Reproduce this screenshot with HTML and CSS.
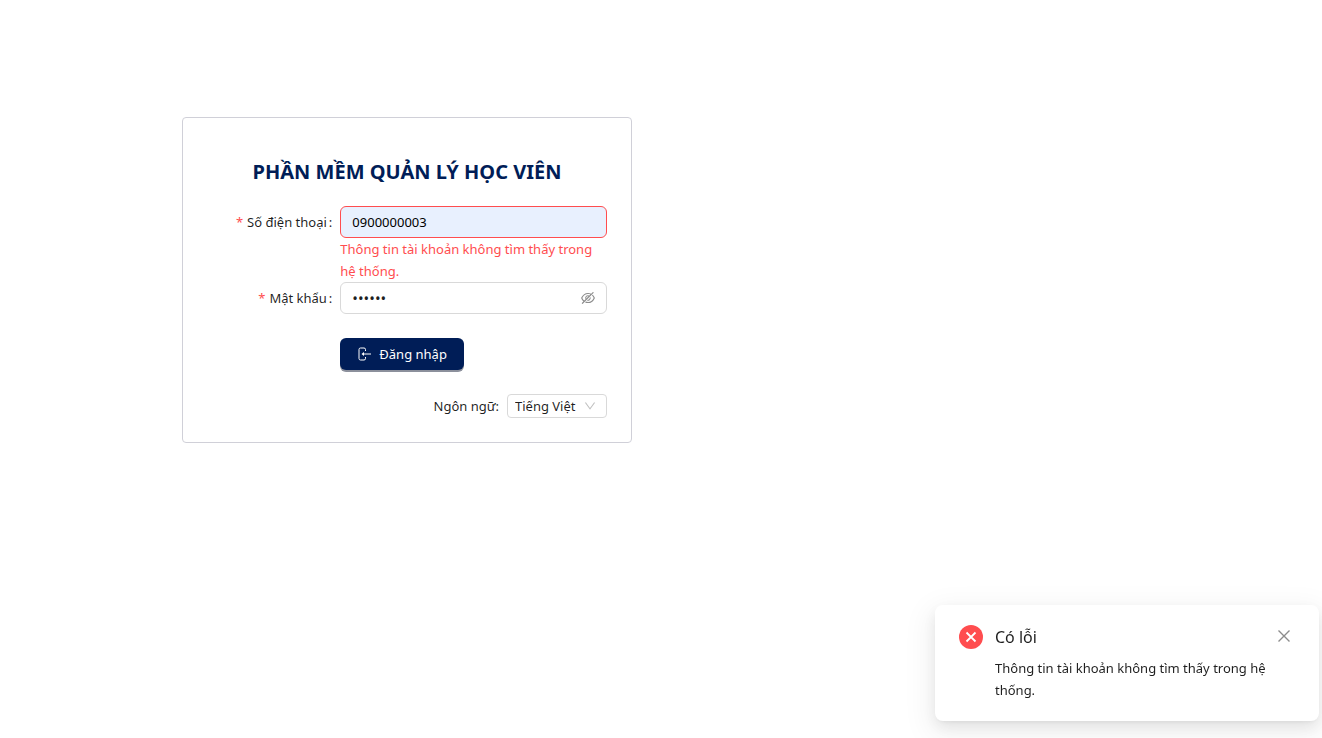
FILE: index.html
```html
<!DOCTYPE html>
<html lang="vi">
<head>
  <meta charset="UTF-8" />
  <meta name="viewport" content="width=device-width, initial-scale=1" />
  <title>Phần mềm quản lý học viên</title>
  <link rel="stylesheet" href="styles.css">
</head>
<body>
  <main class="login-page">
    <form class="login-card" onsubmit="return false">
      <h1 class="login-title">PHẦN MỀM QUẢN LÝ HỌC VIÊN</h1>

      <div class="form-item">
        <label for="phone" class="required">Số điện thoại</label>
        <div class="form-control">
          <input type="text" id="phone" class="input input-error" value="0900000003" aria-describedby="phoneError" />
          <div id="phoneError" class="error-text">Thông tin tài khoản không tìm thấy trong hệ thống.</div>
        </div>
      </div>

      <div class="form-item">
        <label for="password" class="required">Mật khẩu</label>
        <div class="form-control input password-box">
          <input type="password" id="password" value="123456" />
          <button type="button" class="icon-btn" id="togglePassword" aria-label="Hiện mật khẩu">
            <svg viewBox="64 64 896 896" width="14" height="14" fill="currentColor">
              <path d="M942.2 486.2Q889.47 375.11 816.7 305l-50.88 50.88C807.31 395.53 843.45 447.4 874.7 512 791.5 684.2 673.4 766 512 766q-72.67 0-133.87-22.38L323 798.75Q408 838 512 838q288.3 0 430.2-300.3a60.29 60.29 0 000-51.5zm-63.57-320.64L836 122.88a8 8 0 00-11.32 0L715.31 232.2Q624.86 186 512 186q-288.3 0-430.2 300.3a60.3 60.3 0 000 51.5q56.69 119.4 136.5 191.41L112.48 835a8 8 0 000 11.31L155.17 889a8 8 0 0011.31 0l712.15-712.12a8 8 0 000-11.32zM149.3 512C232.6 339.8 350.7 258 512 258c54.54 0 104.13 9.36 149.12 28.39l-70.3 70.3a176 176 0 00-238.13 238.13l-83.42 83.42C223.1 637.49 183.3 582.28 149.3 512zm246.7 0a112.11 112.11 0 01146.2-106.69L401.31 546.2A112 112 0 01396 512z" />
              <path d="M508 624c-3.46 0-6.87-.16-10.25-.47l-52.82 52.82a176.09 176.09 0 00227.42-227.42l-52.82 52.82c.31 3.38.47 6.79.47 10.25a111.94 111.94 0 01-112 112z" />
            </svg>
          </button>
        </div>
      </div>

      <div class="form-actions">
        <button type="submit" class="btn-primary">
          <svg viewBox="0 0 14 14" width="14" height="14" fill="none" stroke="currentColor">
            <path d="M8.5 4V2.500a1.500 1.500 0 0 0-1.500-1.500H3.500a1.500 1.500 0 0 0-1.500 1.500v9a1.500 1.500 0 0 0 1.500 1.500H7a1.500 1.500 0 0 0 1.500-1.500V10" />
            <path d="M14 7H6" />
            <path d="M7 5v4L4.500 7z" fill="currentColor" stroke="none" />
          </svg>
          <span>Đăng nhập</span>
        </button>
      </div>

      <div class="language">
        <label for="language">Ngôn ngữ:</label>
        <div class="select-box">
          <select id="language">
            <option value="vi">Tiếng Việt</option>
            <option value="en">English</option>
          </select>
          <svg class="arrow" viewBox="64 64 896 896" width="12" height="12" fill="currentColor">
            <path d="M884 256h-75c-5.1 0-9.9 2.5-12.9 6.6L512 654.2 227.9 262.6c-3-4.1-7.8-6.6-12.9-6.6h-75c-6.5 0-10.3 7.4-6.5 12.7l352.6 486.1c12.8 17.6 39 17.6 51.7 0l352.6-486.1c3.9-5.3.1-12.7-6.4-12.7z" />
          </svg>
        </div>
      </div>
    </form>
  </main>

  <!-- Thông báo lỗi -->
  <div class="notification" id="notification" role="alert">
    <svg class="notification-icon" viewBox="0 0 24 24" width="24" height="24">
      <circle cx="12" cy="12" r="12" fill="#ff4d4f" />
      <path d="M7.5 7.5l9 9M16.5 7.5l-9 9" stroke="#fff" stroke-width="1.8" />
    </svg>
    <div class="notification-body">
      <div class="notification-title">Có lỗi</div>
      <div class="notification-text">Thông tin tài khoản không tìm thấy trong hệ thống.</div>
    </div>
    <button type="button" class="icon-btn close-btn" id="closeNotification" aria-label="Đóng">
      <svg viewBox="0 0 16 16" width="16" height="16" fill="none" stroke="currentColor" stroke-width="1.4">
        <path d="M2.5 2.5l11 11M13.5 2.5l-11 11" />
      </svg>
    </button>
  </div>

  <script>
    document.getElementById("togglePassword").addEventListener("click", function () {
      const input = document.getElementById("password");
      input.type = input.type === "password" ? "text" : "password";
    });

    document.getElementById("closeNotification").addEventListener("click", function () {
      document.getElementById("notification").style.display = "none";
    });
  </script>
</body>
</html>
```

FILE: styles.css
```css
* {
  box-sizing: border-box;
}
body {
  margin: 0;
  font-family: "Segoe UI", "Noto Sans", sans-serif;
  font-size: 13px;
  line-height: 22px;
  color: rgba(0, 0, 0, 0.88);
  background: #fff;
}
input, select, button {
  font-family: inherit;
  font-size: inherit;
  line-height: inherit;
  color: inherit;
}
svg {
  display: block;
}
.login-page {
  padding: 117px 24px 24px 182px;
}
.login-card {
  max-width: 450px;
  padding: 24px;
  border: 1px solid #d0d0d8;
  border-radius: 4px;
}
.login-title {
  margin: 16px 0 20px;
  font-size: 20px;
  line-height: 28px;
  font-weight: 700;
  text-align: center;
  color: #001d57;
}
.form-item {
  display: grid;
  grid-template-columns: 1fr 2fr;
}
.form-item label {
  line-height: 32px;
  text-align: right;
  padding-right: 8px;
}
.required::before {
  content: "*";
  margin-right: 4px;
  color: #ff4d4f;
}
.required::after {
  content: ":";
  margin-left: 2px;
}
.input {
  display: block;
  width: 100%;
  height: 32px;
  padding: 4px 11px;
  border: 1px solid #d9d9d9;
  border-radius: 6px;
  background: #fff;
}
.input-error {
  border-color: #ff4d4f;
  background: #e8f0fe;
  color: #000;
}
.error-text {
  color: #ff4d4f;
}
.password-box {
  display: flex;
  align-items: center;
}
.password-box input {
  flex: 1;
  min-width: 0;
  padding: 0;
  border: none;
  outline: none;
  background: none;
  font-size: 15px;
}
.icon-btn {
  padding: 0;
  border: none;
  background: none;
  color: rgba(0, 0, 0, 0.45);
  cursor: pointer;
}
.form-actions {
  margin: 24px 0 24px 33.333%;
}
.btn-primary {
  display: flex;
  align-items: center;
  gap: 8px;
  height: 32px;
  padding: 4px 17px;
  border: none;
  border-radius: 6px;
  background: #001d57;
  color: #fff;
  box-shadow: 0 2px 0 #8c909c;
  cursor: pointer;
}
.language {
  display: flex;
  align-items: center;
  justify-content: flex-end;
  gap: 8px;
}
.select-box {
  position: relative;
  width: 100px;
}
.select-box select {
  display: block;
  width: 100%;
  height: 24px;
  padding: 0 24px 0 7px;
  border: 1px solid #d9d9d9;
  border-radius: 4px;
  background: #fff;
  appearance: none;
}
.arrow {
  position: absolute;
  top: 6px;
  right: 11px;
  color: rgba(0, 0, 0, 0.25);
  pointer-events: none;
}
.notification {
  position: fixed;
  right: 3px;
  bottom: 17px;
  display: flex;
  align-items: flex-start;
  gap: 12px;
  width: 384px;
  padding: 20px 24px;
  border-radius: 8px;
  background: #fff;
  box-shadow: 0 6px 16px 0 rgba(0, 0, 0, 0.08), 0 3px 6px -4px rgba(0, 0, 0, 0.12), 0 9px 28px 8px rgba(0, 0, 0, 0.05);
}
.notification-icon {
  flex: none;
}
.notification-body {
  flex: 1;
}
.notification-title {
  margin-bottom: 8px;
  font-size: 16px;
  line-height: 24px;
}
.close-btn {
  position: absolute;
  top: 23px;
  right: 27px;
}
```
